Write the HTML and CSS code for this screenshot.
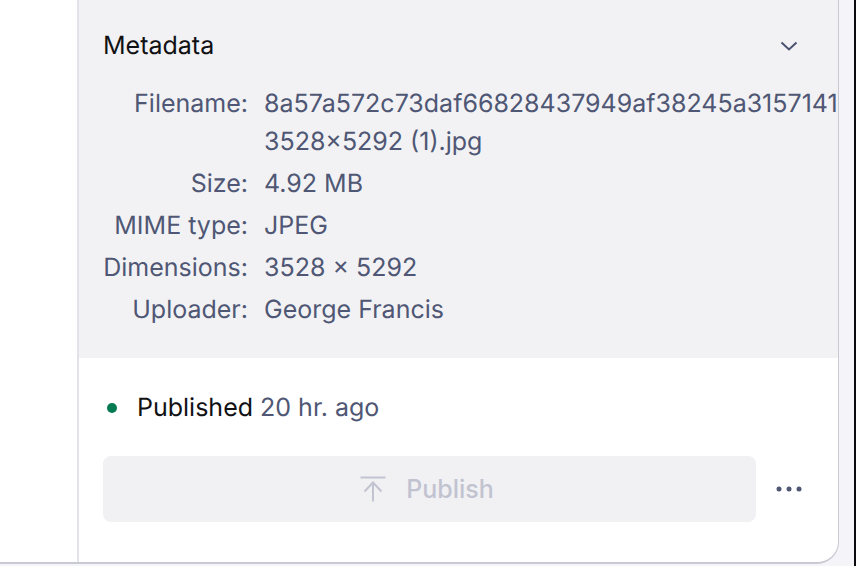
FILE: index.html
```html
<!DOCTYPE html>
<html lang="en">
<head>
<meta charset="utf-8">
<title>Metadata</title>
<link rel="stylesheet" href="styles.css">
</head>
<body>
<div class="frame">
  <div class="gutter"></div>
  <main class="panel">
    <section class="meta">
      <header class="meta-head">
        <h2 class="meta-title">Metadata</h2>
        <svg class="chevron" width="24" height="24" viewBox="0 0 24 24" fill="none" stroke="currentColor" stroke-width="2"><path d="M4.500 8.500 12 15.500 19.500 8.500"/></svg>
      </header>
      <dl class="meta-grid">
        <dt>Filename:</dt><dd>8a57a572c73daf66828437949af38245a3157141<br>3528×5292 (1).jpg</dd>
        <dt>Size:</dt><dd>4.92 MB</dd>
        <dt>MIME type:</dt><dd>JPEG</dd>
        <dt>Dimensions:</dt><dd>3528 × 5292</dd>
        <dt>Uploader:</dt><dd>George Francis</dd>
      </dl>
    </section>
    <section class="foot">
      <div class="status">
        <span class="dot"></span>
        <span class="status-text">Published <span class="muted">20 hr. ago</span></span>
      </div>
      <div class="actions">
        <button class="publish" type="button" disabled>
          <svg width="26" height="26" viewBox="0 0 26 26" fill="none" stroke="currentColor" stroke-width="2"><path d="M0.500 1.500H25.500M13 25.500V6.500M4.500 15.500 13 6.500 21.500 15.500"/></svg>
          <span>Publish</span>
        </button>
        <svg class="more" width="28" height="6" viewBox="0 0 28 6" fill="currentColor"><circle cx="4" cy="3" r="2.500"/><circle cx="14" cy="3" r="2.500"/><circle cx="24" cy="3" r="2.500"/></svg>
      </div>
    </section>
  </main>
</div>
<div class="screen-edge"></div>
</body>
</html>
```

FILE: styles.css
```css
* { box-sizing: border-box; }
html, body { margin: 0; padding: 0; }
body {
  width: 856px;
  height: 566px;
  overflow: hidden;
  background: #f5f5f9;
  font-family: Inter, "Liberation Sans", sans-serif;
  font-size: 25px;
  text-rendering: geometricPrecision;
  position: relative;
}
.frame {
  width: 839px;
  height: 564px;
  display: flex;
  background: #fff;
  border-right: 1px solid #c9c9d4;
  border-bottom: 2px solid #c9c9d4;
  border-bottom-right-radius: 22px;
  overflow: hidden;
}
.gutter { width: 77px; flex: none; }
.panel {
  flex: 1;
  min-width: 0;
  border-left: 2px solid #e2e2ea;
  display: flex;
  flex-direction: column;
}
.meta {
  height: 358px;
  flex: none;
  background: #f2f2f5;
  padding: 27px 0 0 24px;
}
.meta-head {
  display: flex;
  align-items: center;
  justify-content: space-between;
  height: 38px;
  padding-right: 37px;
  color: #4a5270;
}
.meta-title {
  margin: 0;
  font-size: 25px;
  font-weight: 400;
  line-height: 38px;
  color: #111114;
}
.meta-grid {
  margin: 20px 0 0;
  display: grid;
  grid-template-columns: 145px 1fr;
  column-gap: 16px;
  row-gap: 4px;
  line-height: 38px;
  color: #4f5774;
}
.meta-grid dt { text-align: right; white-space: nowrap; }
.meta-grid dd { margin: 0; white-space: nowrap; overflow: hidden; }
.foot {
  flex: 1;
  padding: 31px 0 0 24px;
}
.status {
  display: flex;
  align-items: center;
  height: 38px;
  gap: 20px;
  padding-left: 4px;
}
.dot {
  width: 10px;
  height: 10px;
  border-radius: 50%;
  background: #047a52;
  flex: none;
}
.status-text { line-height: 38px; color: #111114; }
.muted { color: #4f5774; }
.actions {
  margin-top: 29px;
  display: flex;
  align-items: center;
  gap: 19px;
}
.publish {
  width: 653px;
  height: 66px;
  border: 0;
  border-radius: 8px;
  background: #f1f1f4;
  color: #c1c3d0;
  font: inherit;
  font-weight: 500;
  display: flex;
  align-items: center;
  justify-content: center;
  gap: 20px;
  padding: 0 5px 0 0;
}
.more { color: #4f5774; }
.screen-edge {
  position: absolute;
  right: 0;
  top: 0;
  width: 2px;
  height: 566px;
  background: #0b0b0d;
}
```
